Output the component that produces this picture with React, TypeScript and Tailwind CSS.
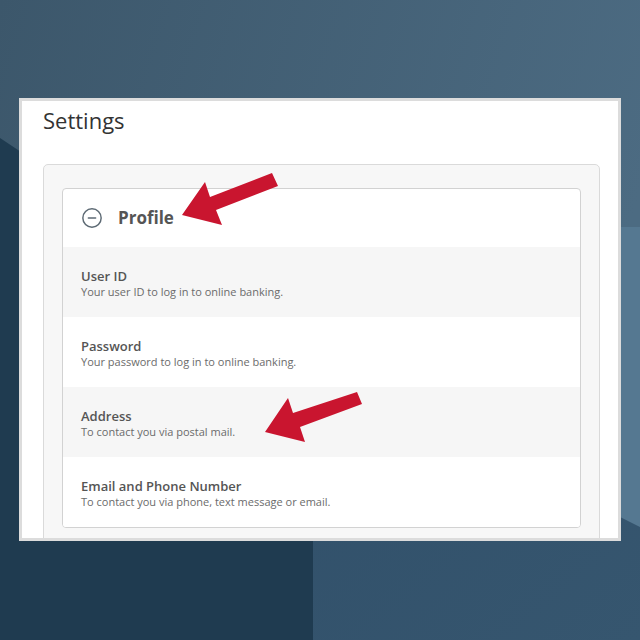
import { CircleMinus } from 'lucide-react';

const rows = [
  { title: 'User ID', desc: 'Your user ID to log in to online banking.', shaded: true },
  { title: 'Password', desc: 'Your password to log in to online banking.', shaded: false },
  { title: 'Address', desc: 'To contact you via postal mail.', shaded: true },
  { title: 'Email and Phone Number', desc: 'To contact you via phone, text message or email.', shaded: false },
];

function Backdrop() {
  return (
    <svg className="absolute inset-0" width="640" height="640" viewBox="0 0 640 640">
      <defs>
        <linearGradient id="top" x1="0" y1="0" x2="1" y2="0.3">
          <stop offset="0" stopColor="#3c576b" />
          <stop offset="1" stopColor="#4c6b82" />
        </linearGradient>
        <linearGradient id="br" x1="0" y1="0" x2="1" y2="1">
          <stop offset="0" stopColor="#31506a" />
          <stop offset="1" stopColor="#36566f" />
        </linearGradient>
      </defs>
      <rect width="640" height="640" fill="url(#top)" />
      <polygon points="540,227 640,227 640,540 540,500" fill="#557891" />
      <polygon points="313,363 640,527 640,640 313,640" fill="url(#br)" />
      <polygon points="0,138 313,347 313,640 0,640" fill="#1f3b50" />
    </svg>
  );
}

function Arrows() {
  return (
    <svg className="absolute inset-0 pointer-events-none" width="640" height="640" viewBox="0 0 640 640">
      <polygon points="272,173 278,186 216,210 222,225 182,215 205,182 210,197" fill="#c9152f" />
      <polygon points="357,392 362,404 300,427 305,442 265,432 288,398 293,413" fill="#c9152f" />
    </svg>
  );
}

export default function App() {
  return (
    <div className="relative w-[640px] h-[640px] overflow-hidden" style={{ fontFamily: '"Open Sans", sans-serif' }}>
      <Backdrop />

      <div className="relative ml-[19px] mt-[98px] w-[602px] h-[443px] overflow-hidden bg-white border-[3px] border-[#dcdcdc]">
        <h1 className="pl-[21px] pt-[5px] pb-[2px] text-[22px] leading-[28px] text-[#333] font-normal">Settings</h1>

        <div className="mt-[28px] ml-[21px] mr-[18px] h-[400px] bg-[#f7f7f7] border border-[#dadada] rounded-[5px] pt-[23px] px-[18px]">
          <div className="bg-white border border-[#d2d2d2] rounded-[4px] overflow-hidden">
            <div className="h-[58px] flex items-center pl-[18px]">
              <CircleMinus size={22} strokeWidth={1.6} className="text-[#5d6a74]" />
              <span className="ml-[15px] text-[17px] leading-[24px] font-bold text-[#555]">Profile</span>
            </div>
            {rows.map((r) => (
              <div key={r.title} className={`h-[70px] pl-[18px] pt-[21px] ${r.shaded ? 'bg-[#f6f6f6]' : 'bg-white'}`}>
                <div className="text-[13px] leading-[16px] font-semibold text-[#555]">{r.title}</div>
                <div className="text-[11px] leading-[15px] text-[#6b6b6b]">{r.desc}</div>
              </div>
            ))}
          </div>
        </div>
      </div>

      <Arrows />
    </div>
  );
}
